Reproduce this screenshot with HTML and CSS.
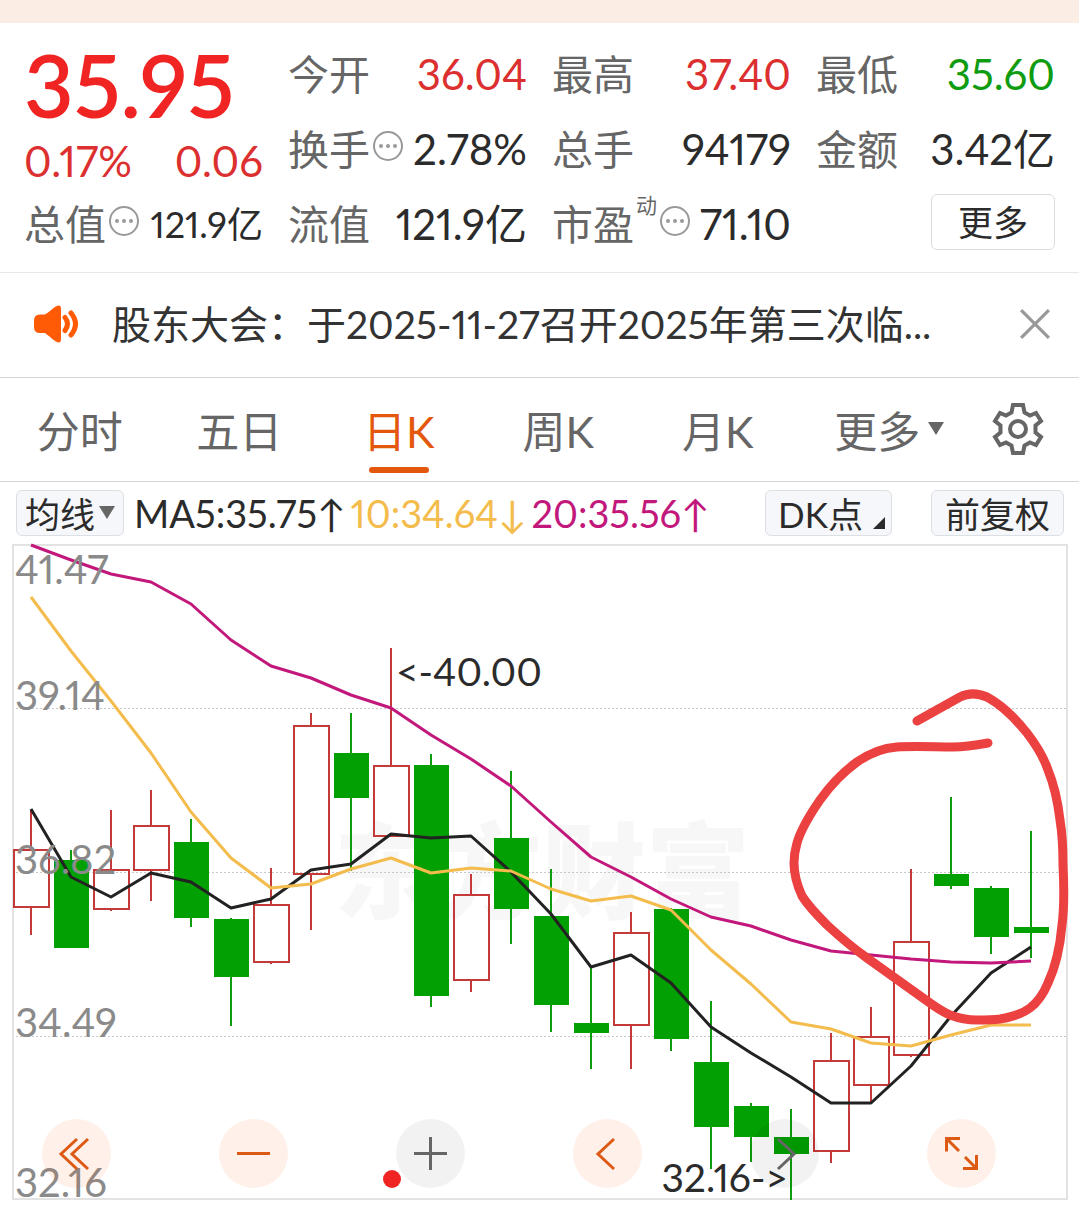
FILE: index.html
```html
<!DOCTYPE html>
<html lang="zh-CN">
<head>
<meta charset="utf-8">
<meta name="viewport" content="width=device-width, initial-scale=1">
<title>日K</title>
<link rel="stylesheet" href="styles.css">
</head>
<body>
<div class="top-strip"></div>

<section class="quote">
  <div class="quote-col">
    <div class="price">35.95</div>
    <div class="change"><span>0.17%</span><span>0.06</span></div>
    <div class="cell">
      <span class="label">总值</span>
      <svg class="hint" viewBox="0 0 32 32"><circle cx="16" cy="16" r="14"/><circle class="dot" cx="9" cy="16" r="2"/><circle class="dot" cx="16" cy="16" r="2"/><circle class="dot" cx="23" cy="16" r="2"/></svg>
      <span class="value value-small">121.9亿</span>
    </div>
  </div>
  <div class="quote-col">
    <div class="cell"><span class="label">今开</span><span class="value up">36.04</span></div>
    <div class="cell">
      <span class="label">换手</span>
      <svg class="hint" viewBox="0 0 32 32"><circle cx="16" cy="16" r="14"/><circle class="dot" cx="9" cy="16" r="2"/><circle class="dot" cx="16" cy="16" r="2"/><circle class="dot" cx="23" cy="16" r="2"/></svg>
      <span class="value">2.78%</span>
    </div>
    <div class="cell"><span class="label">流值</span><span class="value">121.9亿</span></div>
  </div>
  <div class="quote-col">
    <div class="cell"><span class="label">最高</span><span class="value up">37.40</span></div>
    <div class="cell"><span class="label">总手</span><span class="value">94179</span></div>
    <div class="cell">
      <span class="label">市盈</span><span class="mark">动</span>
      <svg class="hint" viewBox="0 0 32 32"><circle cx="16" cy="16" r="14"/><circle class="dot" cx="9" cy="16" r="2"/><circle class="dot" cx="16" cy="16" r="2"/><circle class="dot" cx="23" cy="16" r="2"/></svg>
      <span class="value">71.10</span>
    </div>
  </div>
  <div class="quote-col">
    <div class="cell"><span class="label">最低</span><span class="value down">35.60</span></div>
    <div class="cell"><span class="label">金额</span><span class="value">3.42亿</span></div>
    <div class="cell cell-end"><button class="more" type="button">更多</button></div>
  </div>
</section>

<section class="notice">
  <svg class="speaker" viewBox="0 0 44 38">
    <path class="solid" d="M6 9.500h5Q15 7 19 3.500Q27-2.500 27 4v30q0 6.500-8 .5Q15 31 11 28H6q-6 0-6-6v-6.500q0-6 6-6z"/>
    <path d="M31 12.500q5 6 0 13M37 8q9 11 0 22"/>
  </svg>
  <a class="notice-text" href="#">股东大会：于2025-11-27召开2025年第三次临...</a>
  <button class="close" type="button" aria-label="关闭">
    <svg viewBox="0 0 30 30"><path d="M2 2l26 26M28 2L2 28"/></svg>
  </button>
</section>

<nav class="tabs">
  <button type="button">分时</button>
  <button type="button">五日</button>
  <button type="button" class="active">日K</button>
  <button type="button">周K</button>
  <button type="button">月K</button>
  <button type="button" class="tab-more">更多<svg class="caret" viewBox="0 0 16 13"><path d="M0 0h16L8 13z"/></svg></button>
  <button type="button" aria-label="设置">
    <svg class="gear" viewBox="0 0 52 52">
      <path d="M21 2h10l1.500 7.500 5.500 3 6-2.500 5 8-5.500 4.500v7L49 34l-5 8-6-2.500-5.500 3L31 50H21l-1.500-7.500-5.500-3L8 42l-5-8 5.500-4.500v-7L3 18l5-8 6 2.500 5.500-3z"/>
      <circle cx="26" cy="26" r="8"/>
    </svg>
  </button>
</nav>

<div class="averages">
  <button class="chip chip-ma" type="button">均线<svg class="caret" viewBox="0 0 16 13"><path d="M0 0h16L8 13z"/></svg></button>
  <span class="ma5">MA5:35.75↑</span>
  <span class="ma10">10:34.64↓</span>
  <span class="ma20">20:35.56↑</span>
  <button class="chip chip-dk" type="button">DK点<svg class="corner" viewBox="0 0 12 12"><path d="M12 0v12H0z"/></svg></button>
  <button class="chip chip-adjust" type="button">前复权</button>
</div>

<main class="chart">
  <svg class="plot" viewBox="12 545 1056 655">
    <text class="watermark" x="334" y="911">东方财富</text>
    <path class="grid" d="M12 708.500H1067M12 872.500H1067M12 1036.500H1067"/>
    <rect class="frame" x="13" y="545" width="1054" height="654"/>

    <g class="rise">
      <path d="M31 810V850M31 907V935M111 810V870M111 909V911M151 790V826M151 870V901M271 868V905M271 962V964M311 713V726M311 874V930M391 648V766M471 874V895M471 980V992M631 912V933M631 1025V1069M831 1033V1061M831 1151V1163M871 1007V1037M871 1085V1103M911 869V942M911 1055V1057"/>
      <rect x="14" y="850" width="35" height="57"/>
      <rect x="94" y="870" width="35" height="39"/>
      <rect x="134" y="826" width="35" height="44"/>
      <rect x="254" y="905" width="35" height="57"/>
      <rect x="294" y="726" width="35" height="148"/>
      <rect x="374" y="766" width="35" height="70"/>
      <rect x="454" y="895" width="35" height="85"/>
      <rect x="614" y="933" width="35" height="92"/>
      <rect x="814" y="1061" width="35" height="90"/>
      <rect x="854" y="1037" width="35" height="48"/>
      <rect x="894" y="942" width="35" height="113"/>
    </g>
    <g class="fall">
      <path d="M71 850V948M191 819V927M231 918V1026M351 713V871M431 754V1007M511 771V944M551 869V1032M591 967V1069M671 908V1051M711 1001V1169M751 1103V1162M791 1109V1200M951 797V889M991 886V954M1031 831V958"/>
      <rect x="54" y="860" width="35" height="88"/>
      <rect x="174" y="842" width="35" height="76"/>
      <rect x="214" y="919" width="35" height="58"/>
      <rect x="334" y="753" width="35" height="45"/>
      <rect x="414" y="765" width="35" height="231"/>
      <rect x="494" y="838" width="35" height="71"/>
      <rect x="534" y="916" width="35" height="89"/>
      <rect x="574" y="1023" width="35" height="10"/>
      <rect x="654" y="909" width="35" height="130"/>
      <rect x="694" y="1062" width="35" height="65"/>
      <rect x="734" y="1106" width="35" height="31"/>
      <rect x="774" y="1137" width="35" height="17"/>
      <rect x="934" y="874" width="35" height="12"/>
      <rect x="974" y="888" width="35" height="49"/>
      <rect x="1014" y="927" width="35" height="6"/>
    </g>

    <polyline class="line line-ma5" points="31,809 71,877 111,897 151,873 191,882 231,908 271,899 311,870 351,864 391,834 431,838 471,836 511,872 551,914 591,967 631,955 671,983 711,1027 751,1053 791,1077 831,1103 871,1103 911,1066 951,1016 991,973 1031,947"/>
    <polyline class="line line-ma10" points="31,597 71,651 111,701 151,753 191,812 231,858 271,888 311,884 351,869 391,858 431,873 471,868 511,871 551,889 591,901 631,896 671,910 711,950 751,984 791,1022 831,1029 871,1043 911,1046 951,1035 991,1025 1031,1025"/>
    <polyline class="line line-ma20" points="31,545 71,560 111,574 151,582 191,604 231,640 271,666 311,678 351,695 391,708 431,735 471,759 511,786 551,822 591,857 631,877 671,899 711,917 751,926 791,940 831,951 871,955 911,959 951,962 991,963 1031,961"/>

    <g class="axis">
      <text x="15" y="584">41.47</text>
      <text x="15" y="710">39.14</text>
      <text x="15" y="874">36.82</text>
      <text x="15" y="1037">34.49</text>
      <text x="15" y="1197">32.16</text>
    </g>
    <text class="peak" x="396" y="686">&lt;-40.00</text>
    <text class="peak" x="788" y="1192" text-anchor="end">32.16-&gt;</text>

    <path class="pen" d="M917 721L960 697C970 692 980 694 987 697C1002 705 1015 718 1027 733C1037 746 1044 758 1048 770C1055 787 1058 803 1060 820C1063 838 1063 850 1063 865C1064 885 1064 910 1062 925C1060 948 1055 968 1048 983C1043 995 1038 1002 1030 1008C1022 1014 1012 1017 1000 1019C992 1020 985 1020 977 1020C967 1020 958 1018 950 1015C943 1012 937 1008 930 1003L867 958C853 948 840 937 827 925C817 915 807 904 802 896C797 885 794 873 794 863C794 856 795 850 797 843C801 829 811 813 820 800C830 786 843 772 857 762C870 753 883 748 897 747C916 746 935 747 953 747C966 747 977 745 988 743"/>
  </svg>

  <div class="controls">
    <button type="button" aria-label="最左"><svg viewBox="0 0 69 69"><path d="M35 20L19 35l16 15M46 20L30 35l16 15"/></svg></button>
    <button type="button" aria-label="缩小"><svg viewBox="0 0 69 69"><path d="M18 34.500h33"/></svg></button>
    <button type="button" class="muted" aria-label="放大"><svg viewBox="0 0 69 69"><path d="M18 34.500h33M34.500 18v33"/></svg><span class="badge"></span></button>
    <button type="button" aria-label="左移"><svg viewBox="0 0 69 69"><path d="M41 20L25 35l16 15"/></svg></button>
    <button type="button" class="muted" aria-label="右移"><svg viewBox="0 0 69 69"><path d="M28 20l16 15-16 15"/></svg></button>
    <button type="button" aria-label="全屏"><svg viewBox="0 0 69 69"><path d="M33 19.500H19.500v13M20 20l12 12M36 49.500h13.500V36M50 50L38 38"/></svg></button>
  </div>
</main>
</body>
</html>
```
FILE: styles.css
```css
* { box-sizing: border-box; }

body {
  margin: 0;
  background: #fff;
  color: #2b2b2b;
  font-family: Lato, "Noto Sans CJK SC", sans-serif;
  font-variant-numeric: proportional-nums;
}

button {
  margin: 0;
  padding: 0;
  border: 0;
  background: none;
  color: inherit;
  font: inherit;
}

.top-strip { height: 23px; background: #fcede4; }

.quote {
  display: grid;
  grid-template-columns: repeat(4, minmax(0, 1fr));
  column-gap: 25px;
  padding: 14px 24px 10px;
  border-bottom: 1px solid #e8e8e8;
}
.quote-col { display: flex; flex-direction: column; }
.price {
  height: 99px;
  font-size: 86px;
  line-height: 96px;
  font-weight: 600;
  color: #f12424;
}
.change {
  display: flex;
  justify-content: space-between;
  height: 51px;
  font-size: 42px;
  line-height: 51px;
  color: #dc2f2f;
}
.cell {
  display: flex;
  align-items: center;
  height: 75px;
  line-height: 75px;
  white-space: nowrap;
}
.cell-end { justify-content: flex-end; }
.label { font-size: 41px; color: #666; }
.value { margin-left: auto; font-size: 42px; }
.value-small { font-size: 36px; }
.up { color: #dc2f2f; }
.down { color: #109c10; }
.mark {
  align-self: flex-start;
  margin-left: 2px;
  font-size: 21px;
  line-height: 36px;
  color: #666;
}
.hint {
  width: 32px;
  height: 32px;
  margin: 0 0 8px 2px;
  fill: none;
  stroke: #999;
  stroke-width: 2;
}
.hint .dot { fill: #999; stroke: none; }
.more {
  width: 124px;
  height: 56px;
  margin-bottom: 6px;
  border: 1px solid #ddd;
  border-radius: 6px;
  font-size: 35px;
  line-height: 50px;
}

.notice {
  display: flex;
  align-items: center;
  height: 105px;
  padding: 0 28px 2px 34px;
  border-bottom: 1px solid #d4d4d4;
}
.speaker {
  flex: none;
  width: 44px;
  height: 38px;
  margin-right: 34px;
  fill: none;
  stroke: #ff5a05;
  stroke-width: 5;
  stroke-linecap: round;
}
.speaker .solid { fill: #ff5a05; stroke: none; }
.notice-text {
  flex: 1;
  overflow: hidden;
  color: #333;
  font-size: 39px;
  line-height: 58px;
  text-decoration: none;
  white-space: nowrap;
}
.close { width: 32px; height: 32px; }
.close svg { display: block; width: 32px; fill: none; stroke: #999; stroke-width: 3; }

.tabs {
  display: grid;
  grid-template-columns: repeat(6, minmax(0, 1fr)) 122px;
  height: 104px;
  border-bottom: 1px solid #d4d4d4;
  color: #666;
  font-size: 43px;
}
.tabs button {
  display: flex;
  align-items: center;
  justify-content: center;
  padding-bottom: 2px;
  white-space: nowrap;
}
.tabs .active { position: relative; color: #e3580d; }
.tabs .active::after {
  content: "";
  position: absolute;
  bottom: 8px;
  width: 60px;
  height: 6px;
  border-radius: 3px;
  background: #e3580d;
}
.tabs .tab-more { padding-left: 24px; }
.caret { width: 16px; height: 13px; margin-left: 8px; fill: #666; }
.gear { width: 52px; height: 52px; fill: none; stroke: #666; stroke-width: 4; }

.averages {
  display: flex;
  align-items: center;
  gap: 5px;
  height: 63px;
  padding: 0 15px 2px 16px;
  font-size: 38px;
  white-space: nowrap;
}
.chip {
  display: flex;
  align-items: center;
  justify-content: center;
  height: 46px;
  border: 1px solid #dcdfe3;
  border-radius: 6px;
  background: #f6f7fa;
  font-size: 35px;
}
.chip-ma { width: 108px; margin-right: 5px; }
.chip-ma .caret { margin-left: 4px; }
.chip-dk { position: relative; width: 127px; margin-left: auto; padding-right: 16px; }
.corner { position: absolute; right: 6px; bottom: 6px; width: 12px; height: 12px; fill: #2b2b2b; }
.chip-adjust { width: 133px; margin-left: 34px; }
.ma10 { color: #f3bc4c; }
.ma20 { color: #c2187b; }

.chart { position: relative; margin: 0 11px 6px 12px; }
.plot { display: block; width: 100%; height: auto; overflow: visible; }
.frame { fill: none; stroke: #e3e3e3; stroke-width: 2; }
.grid { fill: none; stroke: #c8c8c8; stroke-width: 1; stroke-dasharray: 2 2; }
.watermark { font-size: 104px; font-weight: 900; fill: #f7f7f7; }
.rise { fill: none; stroke: #c43a38; stroke-width: 2; }
.fall { fill: #02a002; }
.fall path { fill: none; stroke: #0f9d0f; stroke-width: 2; }
.line { fill: none; stroke-width: 3; stroke-linejoin: round; }
.line-ma5 { stroke: #222; }
.line-ma10 { stroke: #f3bc4c; }
.line-ma20 { stroke: #c2187b; }
.axis { font-size: 40px; fill: #8a8a8a; }
.peak { font-size: 39px; fill: #2b2b2b; }
.pen {
  fill: none;
  stroke: #ec4141;
  stroke-width: 9;
  stroke-linecap: round;
  stroke-linejoin: round;
}

.controls {
  position: absolute;
  right: 72px;
  bottom: 12px;
  left: 30px;
  display: flex;
  justify-content: space-between;
}
.controls button {
  position: relative;
  width: 69px;
  height: 69px;
  border-radius: 50%;
  background: rgba(255, 90, 10, 0.09);
}
.controls svg { display: block; width: 69px; fill: none; stroke: #dc5a14; stroke-width: 3; }
.controls .muted { background: rgba(0, 0, 0, 0.05); }
.controls .muted svg { stroke: #666; }
.badge {
  position: absolute;
  bottom: 0;
  left: -13px;
  width: 18px;
  height: 18px;
  border-radius: 50%;
  background: #f12424;
}
```
